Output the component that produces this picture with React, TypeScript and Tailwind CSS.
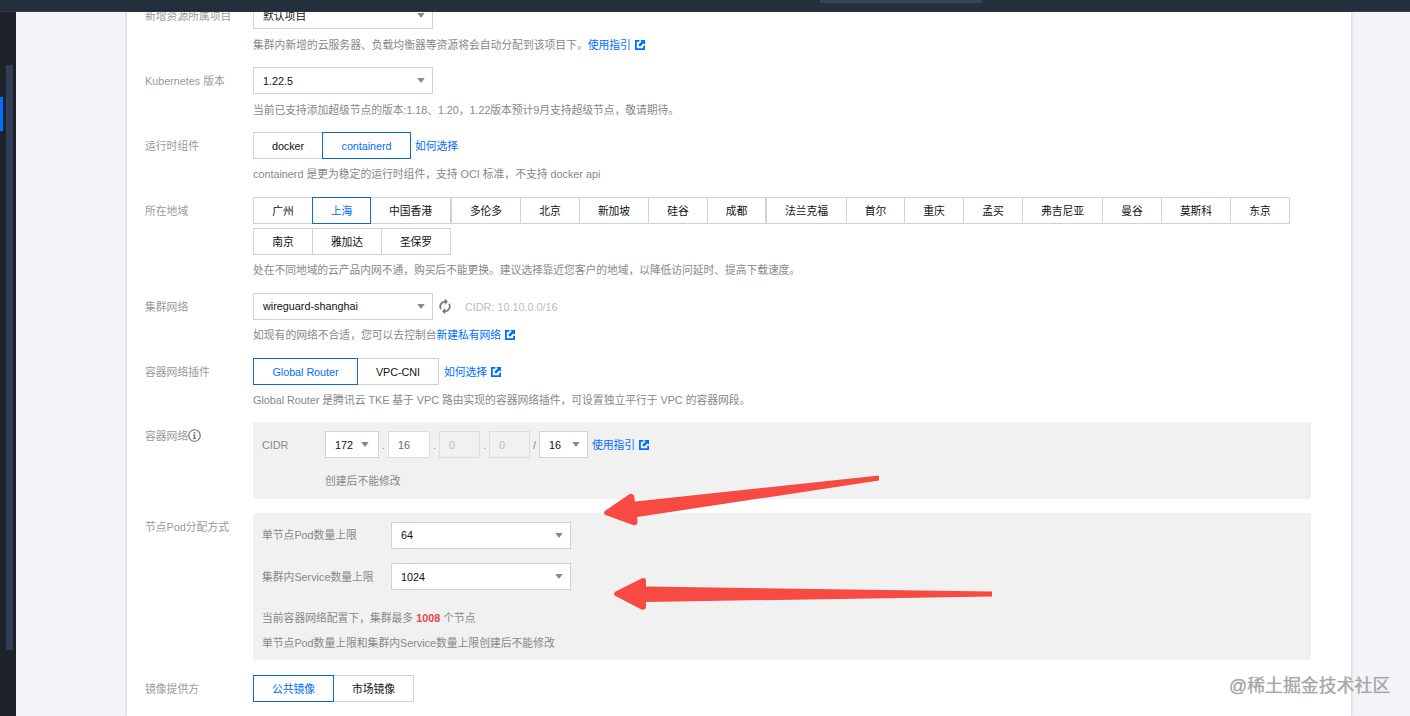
import { useState } from 'react'
import type { ReactNode } from 'react'

interface Option {
  label: string
  width: string
}

const runtimes: Option[] = [
  { label: 'docker', width: 'w-[70px]' },
  { label: 'containerd', width: 'w-[89px] -ml-px' },
]

const regions: Option[] = [
  { label: '广州', width: 'w-[60px]' },
  { label: '上海', width: 'w-[59px] -ml-px' },
  { label: '中国香港', width: 'w-[81px] -ml-px' },
  { label: '多伦多', width: 'w-[70px]' },
  { label: '北京', width: 'w-[60px] -ml-px' },
  { label: '新加坡', width: 'w-[70px] -ml-px' },
  { label: '硅谷', width: 'w-[60px] -ml-px' },
  { label: '成都', width: 'w-[59px] -ml-px' },
  { label: '法兰克福', width: 'w-[81px]' },
  { label: '首尔', width: 'w-[59px] -ml-px' },
  { label: '重庆', width: 'w-[60px] -ml-px' },
  { label: '孟买', width: 'w-[60px] -ml-px' },
  { label: '弗吉尼亚', width: 'w-[81px] -ml-px' },
  { label: '曼谷', width: 'w-[60px] -ml-px' },
  { label: '莫斯科', width: 'w-[70px] -ml-px' },
  { label: '东京', width: 'w-[60px] -ml-px' },
]

const moreRegions: Option[] = [
  { label: '南京', width: 'w-[60px]' },
  { label: '雅加达', width: 'w-[70px] -ml-px' },
  { label: '圣保罗', width: 'w-[70px] -ml-px' },
]

const plugins: Option[] = [
  { label: 'Global Router', width: 'w-[105px]' },
  { label: 'VPC-CNI', width: 'w-[82px] -ml-px' },
]

const images: Option[] = [
  { label: '公共镜像', width: 'w-[81px]' },
  { label: '市场镜像', width: 'w-[81px] -ml-px' },
]

function ExternalIcon() {
  return (
    <svg className="ml-[4px] h-[10px] w-[10px] shrink-0" viewBox="0 0 10 10" fill="none">
      <path d="M4.4 0.9H0.9V9.1H9.1V5.8" stroke="#006eff" strokeWidth="1.8" />
      <path d="M5.2 0H10V4.8L8.5 3.3L5 6.8L3.2 5L6.7 1.500Z" fill="#006eff" />
    </svg>
  )
}

function RefreshIcon() {
  return (
    <svg className="mb-px ml-[6px] h-[15px] w-[12px]" viewBox="4 1 16 22">
      <path
        d="M12 6v3l4-4-4-4v3c-4.42 0-8 3.58-8 8 0 1.57.46 3.03 1.24 4.26L6.7 14.8c-.45-.83-.7-1.79-.7-2.8 0-3.31 2.69-6 6-6zm6.76 1.74L17.3 9.2c.44.84.7 1.79.7 2.8 0 3.31-2.69 6-6 6v-3l-4 4 4 4v-3c4.42 0 8-3.58 8-8 0-1.57-.46-3.03-1.24-4.26z"
        fill="#777"
        stroke="#777"
        strokeWidth="0.6"
      />
    </svg>
  )
}

function InfoIcon() {
  return (
    <svg className="h-[13px] w-[13px]" viewBox="0 0 12 12" fill="none">
      <circle cx="6" cy="6" r="5.3" stroke="#777" strokeWidth="1.1" />
      <path d="M5.2 2.7H6.8V4.1H5.2ZM4.6 5H6.8V8.2H7.5V9.2H4.5V8.2H5.3V6H4.6Z" fill="#777" />
    </svg>
  )
}

function Link({ children, external }: { children: ReactNode; external?: boolean }) {
  return (
    <a href="#" className="inline-flex items-center tracking-[-0.05px] text-[#006eff]">
      {children}
      {external && <ExternalIcon />}
    </a>
  )
}

function Select({ value, className }: { value: string; className: string }) {
  return (
    <button className={`flex h-[27px] shrink-0 items-center justify-between border border-[#cdd2d5] bg-white pr-[7px] pl-[9px] text-[#111] ${className}`}>
      <span>{value}</span>
      <svg className="h-[5px] w-2" viewBox="0 0 8 5">
        <path d="M0.300 0H7.700L4.600 4.200Q4 4.800 3.400 4.200Z" fill="#888" />
      </svg>
    </button>
  )
}

interface SegmentProps {
  options: Option[]
  value: string
  onChange: (value: string) => void
}

function Segment({ options, value, onChange }: SegmentProps) {
  return (
    <div className="flex">
      {options.map((option) => (
        <button
          key={option.label}
          onClick={() => onChange(option.label)}
          className={`h-[27px] shrink-0 border bg-white pt-px text-center tracking-[-0.05px] whitespace-nowrap ${option.width} ${
            option.label === value
              ? 'relative z-10 border-[#0a6cc9] text-[#006eff]'
              : 'border-[#cdd2d5] text-[#111]'
          }`}
        >
          {option.label}
        </button>
      ))}
    </div>
  )
}

function FormRow({ label, children }: { label: ReactNode; children: ReactNode }) {
  return (
    <div className="flex">
      <div className="flex h-[27px] w-[108px] shrink-0 items-center text-[#999]">{label}</div>
      <div className="flex-1">{children}</div>
    </div>
  )
}

function Help({ children, className = '' }: { children: ReactNode; className?: string }) {
  return <div className={`mt-1.5 flex h-[18px] items-center whitespace-pre text-[#888] ${className}`}>{children}</div>
}

function Octet({ value, className }: { value: string; className: string }) {
  return (
    <div className={`flex h-[27px] items-center border pl-[9px] ${className}`}>{value}</div>
  )
}

export default function App() {
  const [runtime, setRuntime] = useState('containerd')
  const [region, setRegion] = useState('上海')
  const [plugin, setPlugin] = useState('Global Router')
  const [image, setImage] = useState('公共镜像')

  return (
    <div className="relative h-[716px] w-[1410px] overflow-hidden bg-[#f3f4f8] font-['Liberation_Sans','Noto_Sans_CJK_SC',sans-serif] text-[10.8px] leading-[18px]">
      <header className="h-3 border-b border-[#2d3a4c] bg-[#24303c]">
        <div className="ml-[820px] h-[3px] w-[162px] bg-[#36435a]" />
      </header>

      <div className="flex h-[704px]">
        <aside className="flex w-4 shrink-0 bg-[#1e222c]">
          <div className="mt-[85px] h-[34px] w-[3px] bg-[#006eff]" />
          <div className="mt-[53px] ml-[3px] h-[585px] w-[7px] bg-[#323e56]" />
        </aside>

        <main className="ml-[111px] w-[1224px] overflow-hidden bg-white pl-[18px] shadow-[0_0_3px_rgba(0,0,0,0.25)]">
          <div className="-mt-[10px] flex flex-col gap-[14px]">
            <FormRow label="新增资源所属项目">
              <Select value="默认项目" className="w-[180px]" />
              <Help className="pt-0.5">
                集群内新增的云服务器、负载均衡器等资源将会自动分配到该项目下。
                <Link external>使用指引</Link>
              </Help>
            </FormRow>

            <FormRow label="Kubernetes 版本">
              <Select value="1.22.5" className="w-[180px]" />
              <Help className="pt-px tracking-[-0.05px]">当前已支持添加超级节点的版本:1.18、1.20，1.22版本预计9月支持超级节点，敬请期待。</Help>
            </FormRow>

            <FormRow label="运行时组件">
              <div className="flex items-center gap-1">
                <Segment options={runtimes} value={runtime} onChange={setRuntime} />
                <Link>如何选择</Link>
              </div>
              <Help>containerd 是更为稳定的运行时组件，支持 OCI 标准，不支持 docker api</Help>
            </FormRow>

            <FormRow label="所在地域">
              <div className="flex flex-col gap-1">
                <Segment options={regions} value={region} onChange={setRegion} />
                <Segment options={moreRegions} value={region} onChange={setRegion} />
              </div>
              <Help className="tracking-[-0.07px]">处在不同地域的云产品内网不通，购买后不能更换。建议选择靠近您客户的地域，以降低访问延时、提高下载速度。</Help>
            </FormRow>

            <FormRow label="集群网络">
              <div className="flex items-center">
                <Select value="wireguard-shanghai" className="w-[180px] pb-px" />
                <RefreshIcon />
                <span className="ml-[14px] pt-px text-[#bbb]">CIDR: 10.10.0.0/16</span>
              </div>
              <Help>
                如现有的网络不合适，您可以去控制台<Link external>新建私有网络</Link>
              </Help>
            </FormRow>

            <FormRow label="容器网络插件">
              <div className="flex items-center gap-[5px]">
                <Segment options={plugins} value={plugin} onChange={setPlugin} />
                <Link external>如何选择</Link>
              </div>
              <Help className="tracking-[-0.02px]">Global Router 是腾讯云 TKE 基于 VPC 路由实现的容器网络插件，可设置独立平行于 VPC 的容器网段。</Help>
            </FormRow>

            <div className="-mt-px">
              <FormRow label={<>容器网络<InfoIcon /></>}>
                <div className="h-[77px] w-[1058px] bg-[#f1f1f1] pt-[9px] pl-[9px] text-[#888]">
                  <div className="flex items-center">
                    <span className="w-[63px]">CIDR</span>
                    <Select value="172" className="w-[54px] pr-[9px]" />
                    <span className="w-[9px] text-center">.</span>
                    <Octet value="16" className="w-[42px] border-[#ddd] bg-white text-[#666]" />
                    <span className="w-[9px] text-center">.</span>
                    <Octet value="0" className="w-[41px] border-[#ddd] text-[#bbb]" />
                    <span className="w-[9px] text-center">.</span>
                    <Octet value="0" className="w-[41px] border-[#ddd] text-[#bbb]" />
                    <span className="w-[9px] text-center">/</span>
                    <Select value="16" className="mr-1 w-[49px]" />
                    <Link external>使用指引</Link>
                  </div>
                  <p className="mt-[14px] ml-[63px]">创建后不能修改</p>
                </div>
              </FormRow>
            </div>

            <FormRow label="节点Pod分配方式">
              <div className="h-[147px] w-[1058px] bg-[#f1f1f1] pt-[9px] pl-[9px] text-[#888]">
                <div className="flex items-center">
                  <span className="w-[129px] pb-px">单节点Pod数量上限</span>
                  <Select value="64" className="w-[180px] pb-px" />
                </div>
                <div className="mt-[14px] flex items-center">
                  <span className="w-[129px]">集群内Service数量上限</span>
                  <Select value="1024" className="w-[180px]" />
                </div>
                <p className="mt-[19px]">
                  当前容器网络配置下，集群最多 <b className="text-[#e54545]">1008</b> 个节点
                </p>
                <p className="mt-[7px]">单节点Pod数量上限和集群内Service数量上限创建后不能修改</p>
              </div>
            </FormRow>

            <div className="mt-px">
              <FormRow label="镜像提供方">
                <Segment options={images} value={image} onChange={setImage} />
              </FormRow>
            </div>
          </div>
        </main>
      </div>

      {/* Hand-drawn callouts over the pod settings */}
      <svg className="pointer-events-none absolute top-[470px] left-[600px] z-20 h-[146px] w-[400px]" viewBox="600 470 400 146" fill="#f74a43">
        <path d="M879 475.5L635 501.5L634 495.5Q632 492.500 629 494.500L605.500 510.500Q602.500 513 605.500 515L633 525Q637 526 637.500 522.500L637 517L879 480.500Z" />
        <path d="M992 591.500L646 586.500V580Q645 577 641.500 578.500L615.500 591.500Q612.500 594 615.500 596L641.500 609.500Q645 610.500 646 607.500V602L992 596.500Z" />
      </svg>

      <div className="absolute top-[673px] left-[1229px] z-20 text-[17.9px] leading-[26px] whitespace-nowrap text-[#a6a6a6] [text-shadow:0_0_1px_#bbb]">
        @稀土掘金技术社区
      </div>
    </div>
  )
}
